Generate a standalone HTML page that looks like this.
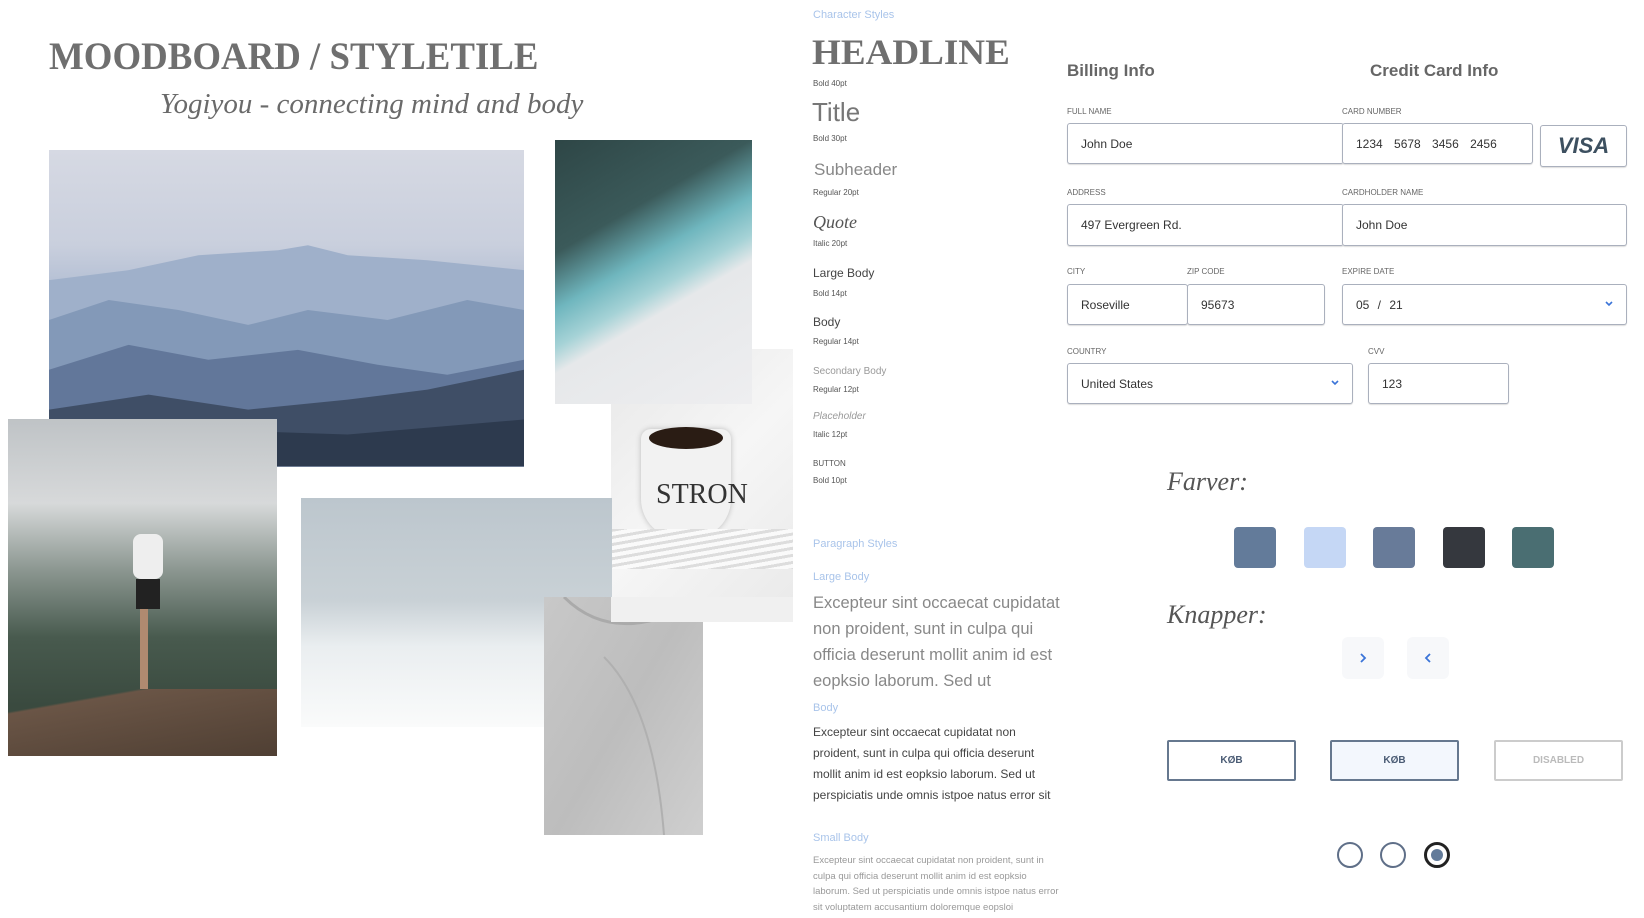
<!DOCTYPE html>
<html><head><meta charset="utf-8">
<style>
*{margin:0;padding:0;box-sizing:border-box}
body{width:1644px;height:918px;background:#fff;position:relative;overflow:hidden;font-family:"Liberation Sans",sans-serif;color:#555}
.a{position:absolute;white-space:nowrap}
.img{position:absolute;overflow:hidden}
.sm{font-size:8px;color:#555}
.lbl{position:absolute;font-size:8px;color:#666}
.inp{position:absolute;border:1.5px solid #aab0bd;border-radius:3px;background:#fff;font-size:12px;color:#333;padding-left:13px;display:flex;align-items:center;box-shadow:0 1px 1px #ddd}
.sw{position:absolute;top:527px;width:42px;height:41px;border-radius:4px}
.btn{position:absolute;top:740px;height:41px;width:129px;border:2px solid #66788f;border-radius:2px;font-size:10px;font-weight:bold;color:#4a5b74;display:flex;align-items:center;justify-content:center}
.rad{position:absolute;top:842px;width:26px;height:26px;border-radius:50%;border:2.5px solid #5f6f88}
.chev{position:absolute;right:12px;top:50%;margin-top:-5px}
</style></head><body>

<div class="a" style="left:49px;top:34px;font-family:'Liberation Serif',serif;font-weight:bold;font-size:39px;color:#6f6f6f;transform:scaleX(0.945);transform-origin:left">MOODBOARD / STYLETILE</div>
<div class="a" style="left:160px;top:88px;font-family:'Liberation Serif',serif;font-style:italic;font-size:29px;color:#6a6a6a">Yogiyou - connecting mind and body</div>

<div class="img" style="left:49px;top:150px;width:475px;height:317px;background:linear-gradient(#d6d9e3,#c9cfdd 30%,#a9b7cf 50%)">
<svg width="475" height="317" viewBox="0 0 477 317">
<path d="M0 130 L80 120 L150 105 L230 100 L260 95 L300 105 L380 110 L477 120 L477 317 L0 317Z" fill="#9fb0ca"/>
<path d="M0 170 L60 150 L130 160 L200 175 L260 160 L340 170 L420 150 L477 160 L477 317 L0 317Z" fill="#8399b8"/>
<path d="M0 220 L80 195 L160 210 L250 200 L330 215 L400 225 L477 210 L477 317 L0 317Z" fill="#62779a"/>
<path d="M0 260 L100 245 L200 260 L300 250 L380 240 L477 220 L477 317 L0 317Z" fill="#3f4e66"/>
<path d="M0 290 L150 280 L300 285 L477 270 L477 317 L0 317Z" fill="#2d3a4e"/>
</svg></div>

<div class="img" style="left:611px;top:349px;width:182px;height:273px;background:linear-gradient(135deg,#e8e8e8,#f6f6f6 50%,#e9e9e9)">
<div style="position:absolute;left:30px;top:80px;width:90px;height:110px;border-radius:10px 10px 40px 40px;background:#f2f2f2;box-shadow:0 0 6px #bbb"></div>
<div style="position:absolute;left:38px;top:78px;width:74px;height:22px;border-radius:50%;background:#2a1c14"></div>
<div class="a" style="left:45px;top:130px;font-family:'Liberation Serif',serif;font-size:28px;color:#333">STRON</div>
<div style="position:absolute;left:0;top:180px;width:182px;height:40px;background:repeating-linear-gradient(170deg,#ddd 0 3px,#fafafa 3px 7px)"></div>
</div>

<div class="img" style="left:555px;top:140px;width:197px;height:264px;background:linear-gradient(150deg,#2e4646 0%,#3b5a5a 30%,#6fb6be 45%,#a5d2d6 55%,#e6e8ea 62%,#eeeef0 100%)"></div>

<div class="img" style="left:8px;top:419px;width:269px;height:337px;background:linear-gradient(#bfc3c6,#d7d9da 25%,#8b9690 45%,#485a4e 65%,#3a4a3f 85%)">
<div style="position:absolute;left:0;top:270px;width:269px;height:67px;background:linear-gradient(170deg,transparent 20%,#6a5546 22%,#4f3f33)"></div>
<div style="position:absolute;left:125px;top:115px;width:30px;height:45px;background:#eee;border-radius:8px"></div>
<div style="position:absolute;left:128px;top:160px;width:24px;height:30px;background:#222"></div>
<div style="position:absolute;left:132px;top:190px;width:8px;height:80px;background:#b08a70"></div>
</div>

<div class="img" style="left:301px;top:498px;width:311px;height:229px;background:linear-gradient(#bcc6cd,#c9d1d6 45%,#eaeef0 65%,#fafbfb)"></div>

<div class="img" style="left:544px;top:597px;width:159px;height:238px;background:linear-gradient(120deg,#c8c8c8,#bdbdbd 50%,#cfcfcf)">
<svg width="159" height="238"><path d="M20 0 Q60 40 120 20" stroke="#aaa" stroke-width="3" fill="none"/><path d="M60 60 Q110 110 120 238" stroke="#b0b0b0" stroke-width="2" fill="none"/></svg>
</div>
<div class="img" style="left:611px;top:597px;width:182px;height:25px;background:#f0f0f0"></div>

<div class="a" style="left:813px;top:9px;font-size:11px;color:#a9c4ea">Character Styles</div>
<div class="a" style="left:812px;top:31px;font-family:'Liberation Serif',serif;font-weight:bold;font-size:36px;color:#6f6f6f;transform:scaleX(1.03);transform-origin:left">HEADLINE</div>
<div class="a sm" style="left:813px;top:79px">Bold 40pt</div>
<div class="a" style="left:812px;top:97px;font-size:26px;color:#777;font-weight:300">Title</div>
<div class="a sm" style="left:813px;top:134px">Bold 30pt</div>
<div class="a" style="left:814px;top:160px;font-size:17px;color:#888">Subheader</div>
<div class="a sm" style="left:813px;top:188px">Regular 20pt</div>
<div class="a" style="left:813px;top:212px;font-family:'Liberation Serif',serif;font-style:italic;font-size:18px;color:#555">Quote</div>
<div class="a sm" style="left:813px;top:239px">Italic 20pt</div>
<div class="a" style="left:813px;top:266px;font-size:12px;color:#444">Large Body</div>
<div class="a sm" style="left:813px;top:289px">Bold 14pt</div>
<div class="a" style="left:813px;top:315px;font-size:12px;color:#444">Body</div>
<div class="a sm" style="left:813px;top:337px">Regular 14pt</div>
<div class="a" style="left:813px;top:366px;font-size:10px;color:#999">Secondary Body</div>
<div class="a sm" style="left:813px;top:385px">Regular 12pt</div>
<div class="a" style="left:813px;top:411px;font-size:10px;color:#999;font-style:italic">Placeholder</div>
<div class="a sm" style="left:813px;top:430px">Italic 12pt</div>
<div class="a sm" style="left:813px;top:459px">BUTTON</div>
<div class="a sm" style="left:813px;top:476px">Bold 10pt</div>

<div class="a" style="left:813px;top:538px;font-size:11px;color:#a9c4ea">Paragraph Styles</div>
<div class="a" style="left:813px;top:571px;font-size:11px;color:#a9c4ea">Large Body</div>
<div class="a" style="left:813px;top:590px;font-size:16.5px;line-height:26px;color:#888;white-space:normal;width:255px">Excepteur sint occaecat cupidatat non proident, sunt in culpa qui officia deserunt mollit anim id est eopksio laborum. Sed ut</div>
<div class="a" style="left:813px;top:702px;font-size:11px;color:#a9c4ea">Body</div>
<div class="a" style="left:813px;top:722px;font-size:12px;line-height:21px;color:#444;white-space:normal;width:245px">Excepteur sint occaecat cupidatat non proident, sunt in culpa qui officia deserunt mollit anim id est eopksio laborum. Sed ut perspiciatis unde omnis istpoe natus error sit</div>
<div class="a" style="left:813px;top:832px;font-size:11px;color:#a9c4ea">Small Body</div>
<div class="a" style="left:813px;top:853px;font-size:9.5px;line-height:15.5px;color:#999;white-space:normal;width:250px">Excepteur sint occaecat cupidatat non proident, sunt in culpa qui officia deserunt mollit anim id est eopksio laborum. Sed ut perspiciatis unde omnis istpoe natus error sit voluptatem accusantium doloremque eopsloi</div>

<div class="a" style="left:1067px;top:61px;font-size:17px;font-weight:bold;color:#666">Billing Info</div>
<div class="a" style="left:1370px;top:61px;font-size:17px;font-weight:bold;color:#666">Credit Card Info</div>

<div class="lbl" style="left:1067px;top:107px">FULL NAME</div>
<div class="lbl" style="left:1342px;top:107px">CARD NUMBER</div>
<div class="inp" style="left:1067px;top:123px;width:277px;height:41px">John Doe</div>
<div class="inp" style="left:1342px;top:123px;width:191px;height:41px;word-spacing:8px">1234 5678 3456 2456</div>
<div class="inp" style="left:1540px;top:125px;width:87px;height:42px;justify-content:center;padding:0;font-size:22px;font-weight:bold;font-style:italic;color:#3d5060">VISA</div>

<div class="lbl" style="left:1067px;top:188px">ADDRESS</div>
<div class="lbl" style="left:1342px;top:188px">CARDHOLDER NAME</div>
<div class="inp" style="left:1067px;top:204px;width:277px;height:42px">497 Evergreen Rd.</div>
<div class="inp" style="left:1342px;top:204px;width:285px;height:42px">John Doe</div>

<div class="lbl" style="left:1067px;top:267px">CITY</div>
<div class="lbl" style="left:1187px;top:267px">ZIP CODE</div>
<div class="lbl" style="left:1342px;top:267px">EXPIRE DATE</div>
<div class="inp" style="left:1067px;top:284px;width:121px;height:41px">Roseville</div>
<div class="inp" style="left:1187px;top:284px;width:138px;height:41px">95673</div>
<div class="inp" style="left:1342px;top:284px;width:285px;height:41px;word-spacing:5px">05 / 21<svg class="chev" width="10" height="8"><path d="M2 2 L5 5 L8 2" stroke="#3b74d8" stroke-width="1.6" fill="none"/></svg></div>

<div class="lbl" style="left:1067px;top:347px">COUNTRY</div>
<div class="lbl" style="left:1368px;top:347px">CVV</div>
<div class="inp" style="left:1067px;top:363px;width:286px;height:41px">United States<svg class="chev" width="10" height="8"><path d="M2 2 L5 5 L8 2" stroke="#3b74d8" stroke-width="1.6" fill="none"/></svg></div>
<div class="inp" style="left:1368px;top:363px;width:141px;height:41px">123</div>

<div class="a" style="left:1167px;top:467px;font-family:'Liberation Serif',serif;font-style:italic;font-size:26px;color:#555">Farver:</div>
<div class="sw" style="left:1234px;background:#637b9a"></div>
<div class="sw" style="left:1304px;background:#c5d7f5"></div>
<div class="sw" style="left:1373px;background:#687b99"></div>
<div class="sw" style="left:1443px;background:#35383e"></div>
<div class="sw" style="left:1512px;background:#4a6e72"></div>

<div class="a" style="left:1167px;top:600px;font-family:'Liberation Serif',serif;font-style:italic;font-size:26px;color:#555">Knapper:</div>
<div style="position:absolute;left:1342px;top:637px;width:42px;height:42px;border-radius:6px;background:#f7f8fa"><svg width="42" height="42"><path d="M19 17 L23 21 L19 25" stroke="#3b74d8" stroke-width="1.8" fill="none"/></svg></div>
<div style="position:absolute;left:1407px;top:637px;width:42px;height:42px;border-radius:6px;background:#f7f8fa"><svg width="42" height="42"><path d="M23 17 L19 21 L23 25" stroke="#3b74d8" stroke-width="1.8" fill="none"/></svg></div>

<div class="btn" style="left:1167px">KØB</div>
<div class="btn" style="left:1330px;background:#f3f7fd">KØB</div>
<div class="btn" style="left:1494px;border-color:#ccc;color:#bbb">DISABLED</div>

<div class="rad" style="left:1337px"></div>
<div class="rad" style="left:1380px"></div>
<div class="rad" style="left:1424px;border:3px solid #222"><div style="position:absolute;left:4px;top:4px;width:12px;height:12px;border-radius:50%;background:#637b9a"></div></div>
</body></html>
